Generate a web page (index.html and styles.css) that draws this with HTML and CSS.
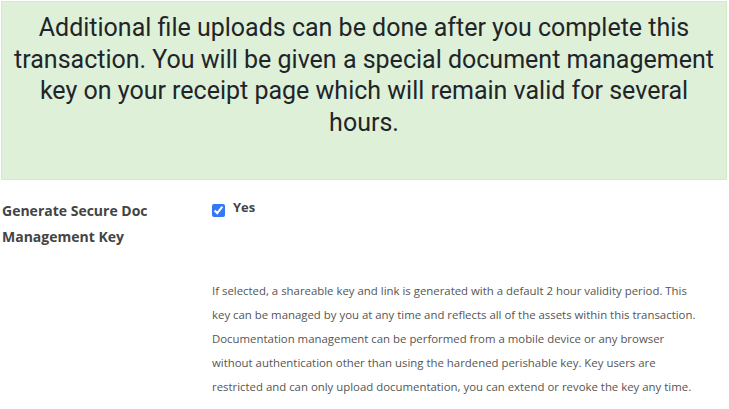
FILE: index.html
```html
<!DOCTYPE html>
<html lang="en">
<head>
  <meta charset="UTF-8" />
  <title>Secure Document Key</title>
  <link rel="stylesheet" href="styles.css">
</head>
<body>

<div class="alert-success">
  Additional file uploads can be done after you complete this transaction. You will be given a special document management key on your receipt page which will remain valid for several hours.
</div>

<div class="form-row">
  <label class="form-label" for="secureKey">Generate Secure Doc Management Key</label>
  <div class="form-field">
    <label class="check">
      <input type="checkbox" id="secureKey" checked>
      <span>Yes</span>
    </label>
  </div>
</div>

<div class="form-row">
  <div class="form-label"></div>
  <p class="help-text">
    If selected, a shareable key and link is generated with a default 2 hour validity period. This key can be managed by you at any time and reflects all of the assets within this transaction. Documentation management can be performed from a mobile device or any browser without authentication other than using the hardened perishable key. Key users are restricted and can only upload documentation, you can extend or revoke the key any time.
  </p>
</div>

</body>
</html>
```

FILE: styles.css
```css
body {
  margin: 0;
  padding: 1px 2px 0 1px;
  font-family: "Open Sans", sans-serif;
  background: #fff;
  color: #444;
}

.alert-success {
  background: #dff0d8;
  border: 1px solid #d6e9c6;
  color: #212529;
  font-family: Roboto, sans-serif;
  font-size: 25px;
  line-height: 31.7px;
  text-align: center;
  padding: 10px 10px 40px;
}

.form-row {
  display: flex;
  margin-top: 18px;
}

.form-label {
  width: 210px;
  flex-shrink: 0;
  padding-left: 1px;
  font-size: 14px;
  font-weight: bold;
  line-height: 26px;
}

.form-field {
  flex: 1;
}

.check {
  display: flex;
  align-items: flex-start;
  gap: 8px;
  font-size: 13px;
  font-weight: bold;
}

.check input {
  margin: 6px 0 0 0;
  width: 13px;
  height: 13px;
  accent-color: #3478f6;
}

.check span {
  line-height: 18px;
}

.help-text {
  flex: 1;
  margin: 11px 0 0;
  padding-right: 20px;
  font-size: 11.4px;
  line-height: 24px;
  color: #555;
}
```
